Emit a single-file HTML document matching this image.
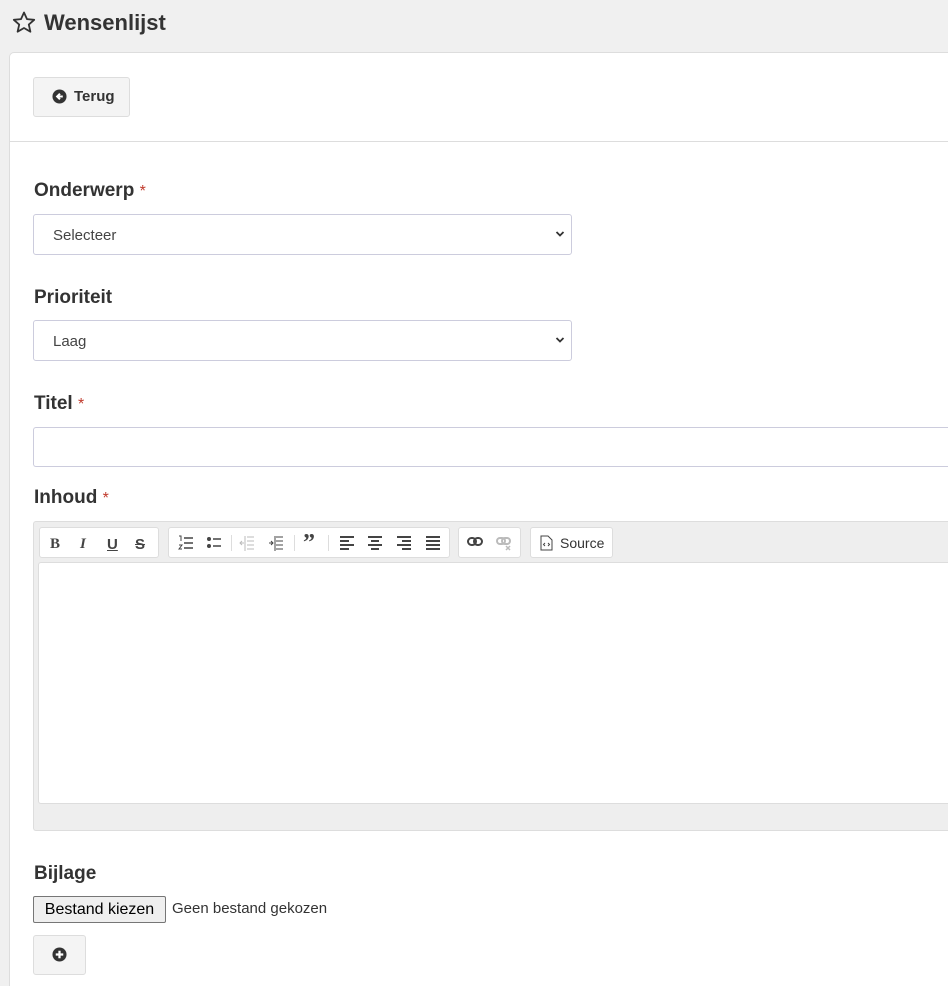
<!DOCTYPE html>
<html><head><meta charset="utf-8"><style>
*{box-sizing:border-box;margin:0;padding:0}
html,body{width:948px;height:986px;overflow:hidden}
body{background:#f0f0f0;font-family:"Liberation Sans",sans-serif;color:#333;position:relative}
.a{position:absolute}
h1{position:absolute;left:44px;top:10px;font-size:22px;font-weight:bold;color:#333}
.card{left:9px;top:52px;width:939px;height:934px;background:#fff;border:1px solid #ddd;border-right:none;border-bottom:none;border-radius:5px 0 0 0}
.btn{background:#f4f4f4;border:1px solid #ddd;border-radius:3px}
.lbl{font-size:19px;font-weight:bold;color:#333}
.lbl span{color:#c0392b;font-weight:normal;font-size:16px}
.sel{border:1px solid #ccd;border-radius:3px;background:#fff;font-size:15px;padding:12px 19px;color:#444}
.chev{position:absolute;right:6px;top:14px}
.grp{top:527px;height:31px;background:#fff;border:1px solid #ddd;border-radius:3px}
.ic{position:absolute;top:8px;font-size:15px;font-weight:bold;color:#444}
</style></head><body>
<svg class="a" style="left:12px;top:11px" width="24" height="23" viewBox="0 0 24 23"><path d="M12 1.5l3 6.6 7.2.7-5.4 4.8 1.6 7.1L12 17l-6.4 3.7 1.6-7.1-5.4-4.8 7.2-.7z" fill="none" stroke="#333" stroke-width="1.8" stroke-linejoin="round"/></svg>
<h1>Wensenlijst</h1>
<div class="a card"></div>
<div class="a btn" style="left:33px;top:77px;width:97px;height:40px"></div>
<svg class="a" style="left:52px;top:89px" width="15" height="15" viewBox="0 0 16 16"><circle cx="8" cy="8" r="7.5" fill="#333"/><path d="M11.5 8H6M8.5 5L5.5 8l3 3" stroke="#fff" stroke-width="2.2" fill="none"/></svg>
<div class="a" style="left:74px;top:88px;font-size:15px;font-weight:bold;color:#333">Terug</div>
<div class="a" style="left:10px;top:141px;width:938px;height:1px;background:#ddd"></div>

<div class="a lbl" style="left:34px;top:180px">Onderwerp <span>*</span></div>
<div class="a sel" style="left:33px;top:214px;width:539px;height:41px">Selecteer<svg class="chev" width="10" height="10" viewBox="0 0 10 10"><path d="M1.5 3l3.5 3.5L8.5 3" stroke="#333" stroke-width="1.8" fill="none"/></svg></div>
<div class="a lbl" style="left:34px;top:287px">Prioriteit</div>
<div class="a sel" style="left:33px;top:320px;width:539px;height:41px">Laag<svg class="chev" width="10" height="10" viewBox="0 0 10 10"><path d="M1.5 3l3.5 3.5L8.5 3" stroke="#333" stroke-width="1.8" fill="none"/></svg></div>
<div class="a lbl" style="left:34px;top:393px">Titel <span>*</span></div>
<div class="a sel" style="left:33px;top:427px;width:915px;height:40px;border-right:none;border-radius:3px 0 0 3px"></div>
<div class="a lbl" style="left:34px;top:487px">Inhoud <span>*</span></div>

<div class="a" style="left:33px;top:521px;width:915px;height:310px;background:#eee;border:1px solid #ddd;border-right:none;border-radius:3px 0 0 3px"></div>
<div class="a grp" style="left:39px;width:120px">
<span class="ic" style="left:10px;font-family:'Liberation Serif'">B</span>
<span class="ic" style="left:40px;font-family:'Liberation Serif';font-style:italic">I</span>
<span class="ic" style="left:67px;text-decoration:underline">U</span>
<span class="ic" style="left:95px;text-decoration:line-through">S</span></div>
<div class="a grp" style="left:168px;width:282px">
<svg class="a" style="left:9px;top:7px" width="16" height="16" viewBox="0 0 16 16"><path d="M6 3h9M6 8h9M6 13h9" stroke="#444" stroke-width="1.6"/><path d="M1 1h2v5M1 10h3l-3 4h3" stroke="#444" fill="none"/></svg>
<svg class="a" style="left:37px;top:7px" width="16" height="16" viewBox="0 0 16 16"><circle cx="3" cy="4" r="2" fill="#444"/><circle cx="3" cy="11" r="2" fill="#444"/><path d="M7 4h8M7 11h8" stroke="#444" stroke-width="1.6"/></svg>
<div class="a" style="left:62px;top:7px;width:1px;height:16px;background:#ddd"></div>
<svg class="a" style="left:70px;top:7px" width="16" height="16" viewBox="0 0 16 16"><path d="M8 2h7M8 6h7M8 10h7M8 14h7M6 1v15M5 8H1M3 6L1 8l2 2" stroke="#bbb" fill="none"/></svg>
<svg class="a" style="left:99px;top:7px" width="16" height="16" viewBox="0 0 16 16"><path d="M8 2h7M8 6h7M8 10h7M8 14h7M7 1v15M1 8h4M3 6l2 2-2 2" stroke="#444" fill="none"/></svg>
<div class="a" style="left:125px;top:7px;width:1px;height:16px;background:#ddd"></div>
<span class="ic" style="left:134px;top:2px;font-size:24px;font-family:'Liberation Serif'">”</span>
<div class="a" style="left:159px;top:7px;width:1px;height:16px;background:#ddd"></div>
<svg class="a" style="left:170px;top:8px" width="16" height="14" viewBox="0 0 16 14"><path d="M1 1h14M1 5h9M1 9h14M1 13h9" stroke="#444" stroke-width="2"/></svg>
<svg class="a" style="left:198px;top:8px" width="16" height="14" viewBox="0 0 16 14"><path d="M1 1h14M4 5h8M1 9h14M4 13h8" stroke="#444" stroke-width="2"/></svg>
<svg class="a" style="left:227px;top:8px" width="16" height="14" viewBox="0 0 16 14"><path d="M1 1h14M6 5h9M1 9h14M6 13h9" stroke="#444" stroke-width="2"/></svg>
<svg class="a" style="left:256px;top:8px" width="16" height="14" viewBox="0 0 16 14"><path d="M1 1h14M1 5h14M1 9h14M1 13h14" stroke="#444" stroke-width="2"/></svg></div>
<div class="a grp" style="left:458px;width:63px">
<svg class="a" style="left:8px;top:9px" width="16" height="10" viewBox="0 0 16 10"><rect x="1" y="1" width="8" height="7" rx="3.5" stroke="#444" stroke-width="2" fill="none"/><rect x="7" y="1" width="8" height="7" rx="3.5" stroke="#444" stroke-width="2" fill="none"/></svg>
<svg class="a" style="left:37px;top:9px" width="16" height="14" viewBox="0 0 16 14"><rect x="1" y="1" width="8" height="6" rx="3" stroke="#bbb" stroke-width="2" fill="none"/><rect x="6" y="1" width="8" height="6" rx="3" stroke="#bbb" stroke-width="2" fill="none"/><path d="M10 9l4 4M14 9l-4 4" stroke="#bbb" stroke-width="1.5"/></svg></div>
<div class="a grp" style="left:530px;width:83px">
<svg class="a" style="left:9px;top:7px" width="13" height="16" viewBox="0 0 13 16"><path d="M1 1h7l4 4v10H1z" fill="none" stroke="#444"/><path d="M5 8l-1.5 1.5L5 11M8 8l1.5 1.5L8 11" stroke="#444" fill="none"/></svg>
<span class="a" style="left:29px;top:7px;font-size:14px;color:#333">Source</span></div>
<div class="a" style="left:38px;top:562px;width:910px;height:242px;background:#fff;border:1px solid #ddd;border-right:none;border-radius:3px 0 0 3px"></div>

<div class="a lbl" style="left:34px;top:863px">Bijlage</div>
<div class="a" style="left:33px;top:896px;width:133px;height:27px;background:#efefef;border:1px solid #767676;border-radius:2px;font-size:16px;color:#000;text-align:center;line-height:25px">Bestand kiezen</div>
<div class="a" style="left:172px;top:900px;font-size:15px;color:#333">Geen bestand gekozen</div>
<div class="a btn" style="left:33px;top:935px;width:53px;height:40px"></div>
<svg class="a" style="left:52px;top:947px" width="15" height="15" viewBox="0 0 16 16"><circle cx="8" cy="8" r="7.5" fill="#333"/><path d="M8 4v8M4 8h8" stroke="#fff" stroke-width="2.4"/></svg>
</body></html>
